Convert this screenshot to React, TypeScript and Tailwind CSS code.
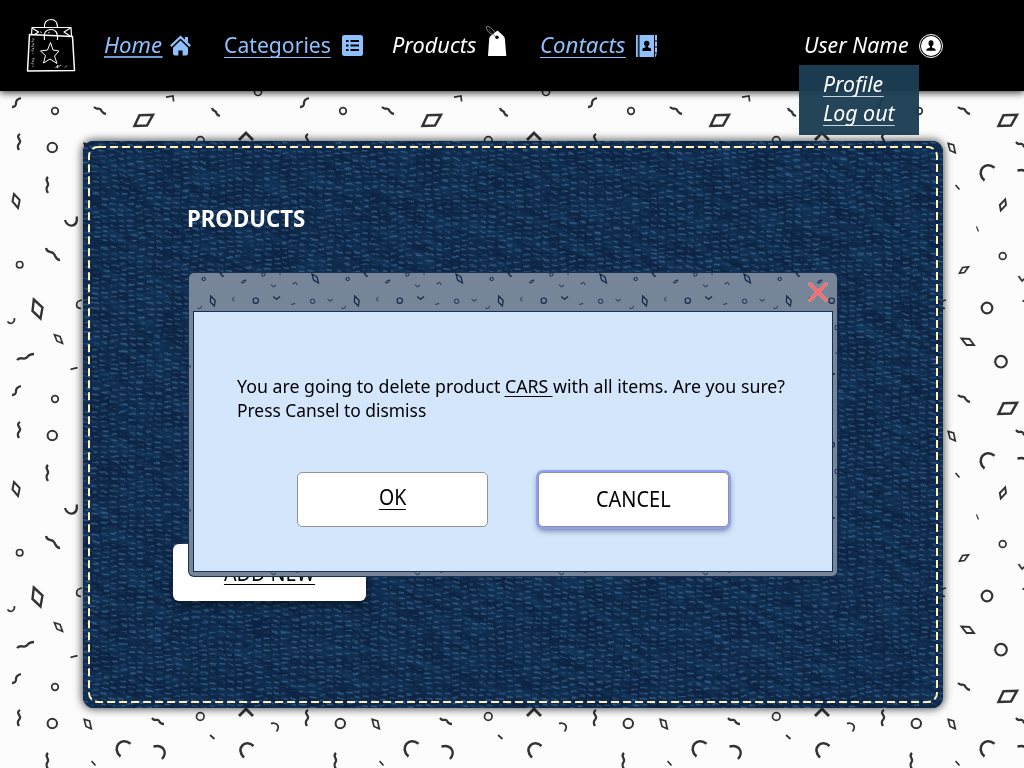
import React from "react";

const squiggles = [
  "M12 107c4 0 4-2 4-4s1-4 5-5",
  "M94 107c3 3 4 1 6 2s1 4 6 5",
  "M212 108c1 4 3 2 4 4s0 3 4 4",
  "M20 134c-5 3 1 5 0 8s-4 3-1 8",
  "M152 142c3 4 4 1 6 2s1 4 6 4",
  "M48 177c-4 3 1 5 0 8s-3 3 0 8",
  "M46 248c1 5 4 3 7 5s2 7 7 7",
  "M17 360c4-4 6 0 9-2s2-4 8-4",
];

function Confetti() {
  return (
    <svg className="absolute inset-0 h-[768px] w-[1024px]" aria-hidden="true">
      <defs>
        <pattern id="confetti" x="0" y="84" width="288" height="288" patternUnits="userSpaceOnUse">
          <g transform="translate(0 -84)" fill="none" stroke="#333335" strokeWidth="1.7">
            <g strokeWidth="2.3">
              {squiggles.map((d) => (
                <path key={d} d={d} />
              ))}
            </g>
            <circle cx="55" cy="111" r="3.3" />
            <circle cx="258" cy="92" r="3.5" />
            <circle cx="200.3" cy="140.5" r="3.8" />
            <circle cx="52.3" cy="147.5" r="4.7" strokeWidth="2" />
            <circle cx="19.7" cy="264.7" r="3.2" />
            <circle cx="138.7" cy="256" r="3.4" />
            <circle cx="123" cy="308" r="5.3" strokeWidth="2.2" />
            <circle cx="137" cy="361.7" r="5.8" strokeWidth="2.2" />
            <path strokeWidth="2.5" d="M139.500 115.200L153 114.800L147 125.500L134.500 126Z" />
            <path d="M166 97.2L173 96L173.6 101.5" />
            <path strokeWidth="2.8" d="M239 140L246 133L253 140" />
            <path d="M84.2 143.4L89.6 145L91.3 152.8L86 150.5Z" />
            <path strokeWidth="2.6" d="M130.5 167.8C121 160 111 172 120.5 180.5" />
            <path strokeWidth="2.4" d="M153.5 170.5C163 168 168 176 162 183" />
            <path strokeWidth="2.6" d="M253.5 170C245 162 235 173 244 181.500" />
            <path strokeWidth="1.8" d="M271 147.500C278 146 280 151 276.500 155.500" />
            <path d="M210 159L214.500 163" />
            <path d="M91.500 185L95.500 189.500" />
            <path strokeWidth="2" d="M14 194L19.700 200L18 208L12.500 201.500Z" />
            <path strokeWidth="2.300" d="M65 220C67 228 78 228 76.800 216.500" />
            <path strokeWidth="2.400" d="M33.800 299.500L42.500 307.500L40.500 318.500L32.500 311Z" />
            <path d="M7.500 321.500C10 325 15 323 14.500 318" />
            <path d="M82 300C75 301 75 308 81 308.500" />
            <path d="M54.500 334.800L60 336.500L62.500 343.200L57 341.200Z" />
            <path d="M70.500 369.300L77.500 367.600" />
            <path strokeWidth="1.900" d="M135.800 205L141.200 199.300L142 205L136.800 210.500Z" />
            <path strokeWidth="1.200" d="M112.500 226.500L114.500 231.500" />
            <path d="M95.500 273.200L98.500 267.500L104.500 266.800L100.500 272.500Z" />
            <path strokeWidth="1.800" d="M154.500 276L158 281L163 276.500" />
            <path d="M158.500 301.500L162 299.500" />
            <path strokeWidth="1.900" d="M97.500 338.500L105.500 339L110 345L102.500 345Z" />
          </g>
        </pattern>
      </defs>
      <rect width="1024" height="768" fill="url(#confetti)" />
    </svg>
  );
}

function Denim() {
  return (
    <svg className="absolute inset-0 h-full w-full rounded-[11px]" aria-hidden="true">
      <defs>
        <filter id="wobble" x="0" y="0" width="100%" height="100%" colorInterpolationFilters="sRGB">
          <feTurbulence type="fractalNoise" baseFrequency="0.035" numOctaves="2" seed="5" result="n" />
          <feDisplacementMap in="SourceGraphic" in2="n" scale="9" xChannelSelector="R" yChannelSelector="G" result="weave" />
          <feTurbulence type="fractalNoise" baseFrequency="0.1 0.2" numOctaves="2" seed="11" />
          <feColorMatrix values="0 0 0 0 0  0 0 0 0 0  0 0 0 0 0  3.4 0 0 0 -0.95" result="gaps" />
          <feComposite in="weave" in2="gaps" operator="in" />
        </filter>
        <filter id="shade" x="0" y="0" width="100%" height="100%" colorInterpolationFilters="sRGB">
          <feTurbulence type="fractalNoise" baseFrequency="0.03 0.14" numOctaves="3" seed="3" />
          <feColorMatrix values="0 0 0 0 0.08  0 0 0 0 0.23  0 0 0 0 0.38  1.5 0 0 0 -0.52" />
        </filter>
        <pattern id="twill" width="9" height="5.5" patternUnits="userSpaceOnUse" patternTransform="skewY(27)">
          <path d="M.5 4.500L7 1.800" stroke="#41719c" strokeWidth="1.500" />
        </pattern>
      </defs>
      <rect width="860" height="567" fill="#0d2444" />
      <g transform="rotate(24 430 283)">
        <rect x="-100" y="-240" width="1060" height="1050" filter="url(#shade)" />
      </g>
      <g filter="url(#wobble)" opacity="0.7">
        <rect width="860" height="567" fill="url(#twill)" />
      </g>
      <rect x="6" y="6" width="848" height="555" rx="9" fill="none" stroke="#fff0b8" strokeWidth="2" strokeDasharray="8 4" />
    </svg>
  );
}

function DialogPattern() {
  return (
    <svg className="absolute inset-0 h-full w-full" aria-hidden="true">
      <defs>
        <pattern id="dialogConfetti" x="0" y="-8" width="144" height="144" patternUnits="userSpaceOnUse">
          <g transform="translate(-189 -265)" fill="none" stroke="#15294a" strokeWidth="1">
            <circle cx="203.700" cy="279" r="1.700" />
            <path d="M219.500 273.500L221.500 274L222 276L224 276.300" strokeWidth="1.400" />
            <path d="M241.500 283L243 280.500L246 280L244.500 282.500Z" />
            <circle cx="263.300" cy="274.500" r="1.700" />
            <path d="M270.800 284.500L273.300 287L276 285" />
            <path d="M292.500 284L295.700 282.300L297 284.800" />
            <path d="M280 273V274.500" />
            <path d="M312 274L317 277L318.500 283L313.500 280Z" strokeWidth="1.300" />
            <path d="M210.800 296L215.300 300.500L214.300 306L210.300 302Z" strokeWidth="1.300" />
            <path d="M234.500 297.200C232 297.500 232 300.500 234.500 301" />
            <circle cx="255.700" cy="300.700" r="2.700" strokeWidth="1.200" />
            <path d="M273.300 296.500L276.500 299.500L280 296.500" strokeWidth="1.300" />
            <path d="M291.500 304.500L295 303.500" />
            <circle cx="312.700" cy="301.300" r="2.200" />
            <path d="M327.500 299L330 301.300L332.800 299" />
            <path d="M197.500 307.500C199 309.500 201.500 308.500 201.300 306" />
            <circle cx="261.500" cy="327.500" r="2.500" />
            <path d="M259.500 353H261.500" />
            <path d="M257 373.500L259 374.500" strokeWidth="1.400" />
            <path d="M190 365V367.500" />
          </g>
        </pattern>
      </defs>
      <rect width="648" height="303" fill="url(#dialogConfetti)" />
    </svg>
  );
}

function BagLogo() {
  return (
    <svg width="50" height="56" viewBox="26 18 50 56" fill="none" stroke="#fff" strokeWidth="1.200" strokeLinejoin="round">
      <path d="M44.500 27.500C44 23 46 19.500 51 19.500S57.500 23 57.500 27.500" />
      <path d="M31.500 34.500L32 27.500H71L71.500 36" />
      <path d="M32 28L38.500 32L34 35M70.500 28L64 32L70 36" />
      <path d="M29.500 34.500L72.500 36.500L74.500 70.500L27.500 71Z" strokeWidth="1.500" />
      <path d="M44.500 40C43.500 32 46 29.500 51 29.500S58 33 57.500 40" />
      <path d="M50.500 42.500L53 50L59 51L54.500 56L57 63.500L50 59L43.500 63L45.500 55.500L40.500 51L47.500 50Z" strokeWidth="1" />
      <path d="M33 38V54M31.500 42L34.500 39M31.500 47L34.500 43M31.500 51L34.500 47M31.500 64L34.500 58M33 58V67" strokeWidth=".6" strokeDasharray="1.500 1" />
      <path d="M55.500 68L58 65L57 68L61 65M65 67.500L67 65.500M40 31.500L42 33M48 33L50 32" strokeWidth=".7" />
    </svg>
  );
}

function HomeIcon() {
  return (
    <svg width="21" height="21" viewBox="0 0 21 21">
      <path d="M.8 11.200L10.500 2L20.200 11.200" fill="none" stroke="#8ec0fb" strokeWidth="2.300" />
      <path d="M15 2H18V8.200L15 5.400Z" fill="#8ec0fb" />
      <path d="M3 12.800L10.500 5.600L18 12.800V18.500Q18 20.500 16 20.500H12.600V15.500H8.400V20.500H5Q3 20.500 3 18.500Z" fill="#8ec0fb" />
    </svg>
  );
}

function ListIcon() {
  return (
    <svg width="21" height="21" viewBox="0 0 21 21">
      <rect width="21" height="21" rx="2.500" fill="#8ec0fb" />
      <path d="M4 6H6.500M4 10.500H6.500M4 15H6.500M8.500 6H17M8.500 10.500H17M8.500 15H17" stroke="#000" strokeWidth="2.200" />
    </svg>
  );
}

function TagIcon() {
  return (
    <svg width="22" height="32" viewBox="0 0 22 32">
      <path d="M10.500 11C4 9 1 4.500 1.500 1.500C4 .5 9 5 11.500 10" fill="none" stroke="#aaa" strokeWidth=".8" />
      <path d="M12.500 5.500L18.500 11Q19.700 12 19.900 14L21.300 31H3L4.200 13.500Q4.300 12 5.500 11Z" fill="#fff" />
      <circle cx="12" cy="12.200" r="1.700" fill="#000" />
      <path d="M11.500 12C8 10 5 6.500 4 4" fill="none" stroke="#555" strokeWidth=".7" />
    </svg>
  );
}

function ContactsIcon() {
  return (
    <svg width="21" height="22" viewBox="0 0 21 22">
      <path d="M0 0H1.800V22H0ZM3.500 0H18V22H3.500Z" fill="#8ec0fb" />
      <path d="M19 0H21V5.500H19ZM19 6.500H21V11.500H19ZM19 12.500H21V17.500H19ZM19 18.500H21L19.500 22H19Z" fill="#8ec0fb" />
      <path d="M2.700 0V22" stroke="#8ec0fb" strokeWidth=".5" opacity=".6" />
      <circle cx="10.700" cy="8.500" r="2.700" fill="#000" />
      <path d="M9.500 10.500H12V12.200L15 13.500V16H6.500V13.500L9.500 12.200Z" fill="#000" />
    </svg>
  );
}

function UserIcon() {
  return (
    <svg width="24" height="24" viewBox="0 0 24 24">
      <circle cx="12" cy="12" r="11.500" fill="#000" stroke="#fff" strokeWidth="1" />
      <circle cx="12" cy="12" r="10" fill="#fff" />
      <ellipse cx="12" cy="9.300" rx="2.500" ry="3" fill="#000" />
      <path d="M11 11H13V13.400L16.500 15V16.800H7.500V15L11 13.400Z" fill="#000" />
    </svg>
  );
}

const navText = "mt-[32px] inline-block h-[26px] origin-left whitespace-nowrap text-[22px] leading-[24px]";

function Header() {
  return (
    <header className="relative z-10 flex h-[91px] items-start bg-black pl-[26px] text-white shadow-[0_2px_7px_rgba(0,0,0,0.75)]">
      <div className="mt-[18px] w-[78px]">
        <BagLogo />
      </div>
      <nav className="flex w-[700px] text-[#8ec0fb]">
        <a className="flex w-[120px]">
          <span className="w-[66px]">
            <span className={`${navText} scale-x-[1.01] border-b-2 border-[#6f9bd0] italic`}>Home</span>
          </span>
          <span className="mt-[35px]"><HomeIcon /></span>
        </a>
        <a className="flex w-[168px]">
          <span className="w-[118px]">
            <span className={`${navText} scale-x-[0.962] border-b border-[#8ec0fb]`}>Categories</span>
          </span>
          <span className="mt-[35px]"><ListIcon /></span>
        </a>
        <a className="flex w-[148px] text-white">
          <span className="w-[93px]">
            <span className={`${navText} scale-x-[0.987] italic`}>Products</span>
          </span>
          <span className="mt-[25px]"><TagIcon /></span>
        </a>
        <a className="flex">
          <span className="w-[96px]">
            <span className={`${navText} scale-x-[1.01] border-b border-[#8ec0fb] italic`}>Contacts</span>
          </span>
          <span className="mt-[35px]"><ContactsIcon /></span>
        </a>
      </nav>
      <div className="relative flex">
        <span className="w-[115px]">
          <span className={`${navText} scale-x-[0.967] italic`}>User Name</span>
        </span>
        <span className="mt-[34px]"><UserIcon /></span>
        <ul className="absolute top-[65px] -left-[5px] h-[70px] w-[120px] bg-[rgba(28,61,84,0.965)] pt-[7px] pl-[24px] text-[22px] leading-[23px] italic">
          <li className="h-[29px]">
            <span className="inline-block h-[25px] origin-left scale-x-[0.963] border-b border-[#c8d2da]">Profile</span>
          </li>
          <li className="h-[29px]">
            <span className="inline-block h-[25px] origin-left scale-x-[0.97] border-b border-[#c8d2da] whitespace-nowrap">Log out</span>
          </li>
        </ul>
      </div>
    </header>
  );
}

function ConfirmDialog() {
  return (
    <div role="dialog" className="absolute top-[132px] left-[106px] h-[303px] w-[648px] overflow-hidden rounded-[5px] bg-[#768698] px-[4px] shadow-[0_0_0_1px_#173152]">
      <DialogPattern />
      <div className="relative flex h-[38px] justify-end pt-[9px] pr-[5px]">
        <button aria-label="Close" className="h-[20px] w-[20px]">
          <svg width="20" height="20" viewBox="0 0 20 20" fill="none">
            <path d="M2 2L18 18M18 2L2 18" stroke="#c4a4aa" strokeWidth="3.800" strokeLinecap="round" />
            <path d="M2 2L18 18M18 2L2 18" stroke="#ff6868" strokeWidth="2.600" strokeLinecap="round" />
          </svg>
        </button>
      </div>
      <div className="relative h-[261px] border border-[#173152] bg-[#d4e6fb] pt-[62px] pl-[43px] text-black">
        <div className="text-[18.5px] leading-[24px] whitespace-nowrap">
          <p className="origin-left scale-x-[0.959]">
            You are going to delete product{" "}
            <span className="inline-block h-[23px] border-b border-black leading-[24px] whitespace-pre">CARS </span>
            with all items. Are you sure?
          </p>
          <p className="origin-left scale-x-[0.94]">Press Cansel to dismiss</p>
        </div>
        <div className="mt-[50px] ml-[60px] flex gap-[50px]">
          <button className="flex h-[55px] w-[191px] justify-center rounded-[5px] border border-[#939393] bg-white pt-[12px] text-[21px] leading-[24px]">
            <span className="h-[25px] scale-x-[0.93] border-b border-black">OK</span>
          </button>
          <button className="flex h-[55px] w-[191px] justify-center rounded-[5px] border border-[#939393] bg-white pt-[14px] text-[21px] leading-[24px] shadow-[0_0_0_2px_#8f9ff8,0_3px_6px_rgba(30,50,90,0.7)]">
            <span className="scale-x-[0.95]">CANCEL</span>
          </button>
        </div>
      </div>
    </div>
  );
}

export default function App() {
  return (
    <div className="relative h-[768px] w-[1024px] overflow-hidden bg-[#fcfcfc] font-['Noto_Sans',sans-serif]">
      <Confetti />
      <Header />
      <main className="relative mt-[50px] ml-[83px] flex h-[567px] w-[860px] flex-col items-start rounded-[11px] bg-[#0f2b4e] shadow-[0_0_9px_1px_rgba(0,0,0,0.7)]">
        <Denim />
        <h1 className="relative mt-[64px] ml-[104px] origin-left scale-x-[0.965] text-[23px] leading-[26px] font-bold text-white">PRODUCTS</h1>
        <button className="relative mt-[313px] ml-[90px] flex h-[57px] w-[193px] justify-center rounded-[6px] bg-white pt-[16px] text-[21px] leading-[26px] text-black shadow-[0_4px_9px_rgba(0,0,0,0.45)]">
          <span className="h-[25px] scale-x-[0.94] border-b border-black">ADD NEW</span>
        </button>
        <ConfirmDialog />
      </main>
    </div>
  );
}
